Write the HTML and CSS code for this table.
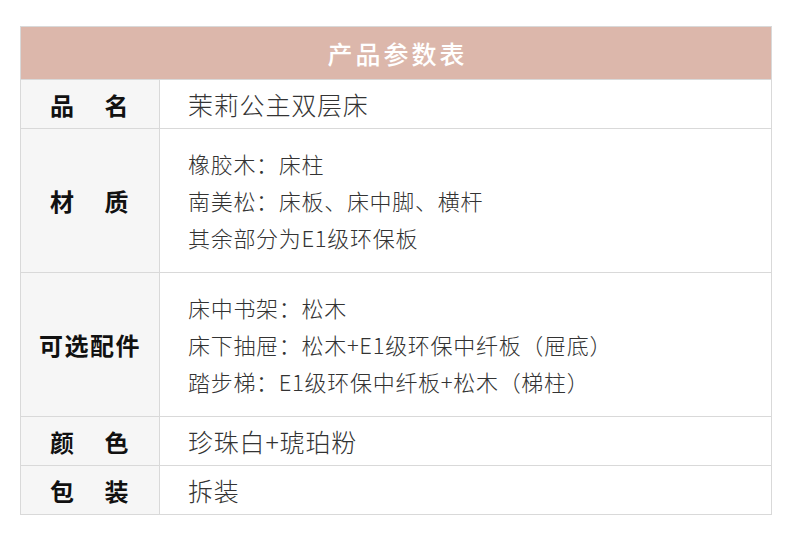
FILE: index.html
```html
<!DOCTYPE html>
<html lang="zh-CN">
<head>
<meta charset="utf-8">
<title>产品参数表</title>
<link rel="stylesheet" href="styles.css">
</head>
<body>
<table class="spec">
  <colgroup>
    <col class="col-label">
    <col class="col-value">
  </colgroup>
  <thead>
    <tr><th class="title" colspan="2">产品参数表</th></tr>
  </thead>
  <tbody>
    <tr class="short">
      <th class="label"><span class="spread"><span>品</span><span>名</span></span></th>
      <td class="value">茉莉公主双层床</td>
    </tr>
    <tr class="tall">
      <th class="label"><span class="spread"><span>材</span><span>质</span></span></th>
      <td class="value multi">
        <div class="line">橡胶木：床柱</div>
        <div class="line">南美松：床板、床中脚、横杆</div>
        <div class="line">其余部分为E1级环保板</div>
      </td>
    </tr>
    <tr class="tall">
      <th class="label">可选配件</th>
      <td class="value multi">
        <div class="line">床中书架：松木</div>
        <div class="line">床下抽屉：松木+E1级环保中纤板（屉底）</div>
        <div class="line">踏步梯：E1级环保中纤板+松木（梯柱）</div>
      </td>
    </tr>
    <tr class="short">
      <th class="label"><span class="spread"><span>颜</span><span>色</span></span></th>
      <td class="value">珍珠白+琥珀粉</td>
    </tr>
    <tr class="short">
      <th class="label"><span class="spread"><span>包</span><span>装</span></span></th>
      <td class="value">拆装</td>
    </tr>
  </tbody>
</table>
</body>
</html>
```

FILE: styles.css
```css
html, body {
  margin: 0;
  padding: 0;
  background: #ffffff;
}

body {
  padding: 26px 19px 0 20px;
  font-family: "Noto Sans CJK SC", "Noto Sans", sans-serif;
}

.spec {
  width: 751px;
  border-collapse: collapse;
  table-layout: fixed;
}

.col-label {
  width: 139px;
}

.col-value {
  width: 612px;
}

.spec th,
.spec td {
  border: 1px solid #d9d9d9;
  padding: 0;
}

.spec .title {
  height: 52px;
  background: #dcb7ab;
  color: #ffffff;
  font-size: 25px;
  font-weight: 500;
  letter-spacing: 3px;
  text-indent: 3px;
  text-align: center;
  vertical-align: middle;
}

.spec .label {
  background: #f6f6f6;
  color: #111111;
  font-size: 24px;
  font-weight: 700;
  text-align: center;
  vertical-align: middle;
  letter-spacing: 1.5px;
}

.spread {
  display: inline-flex;
  gap: 29px;
}

.spec .value {
  padding-left: 28px;
  color: #333333;
  font-size: 25px;
  font-weight: 300;
  letter-spacing: 0.8px;
  vertical-align: middle;
  line-height: 37px;
}

.spec .multi {
  font-size: 22px;
  letter-spacing: 0.7px;
}

.short {
  height: 49px;
}

.tall {
  height: 144px;
}

.line {
  white-space: nowrap;
}
```
